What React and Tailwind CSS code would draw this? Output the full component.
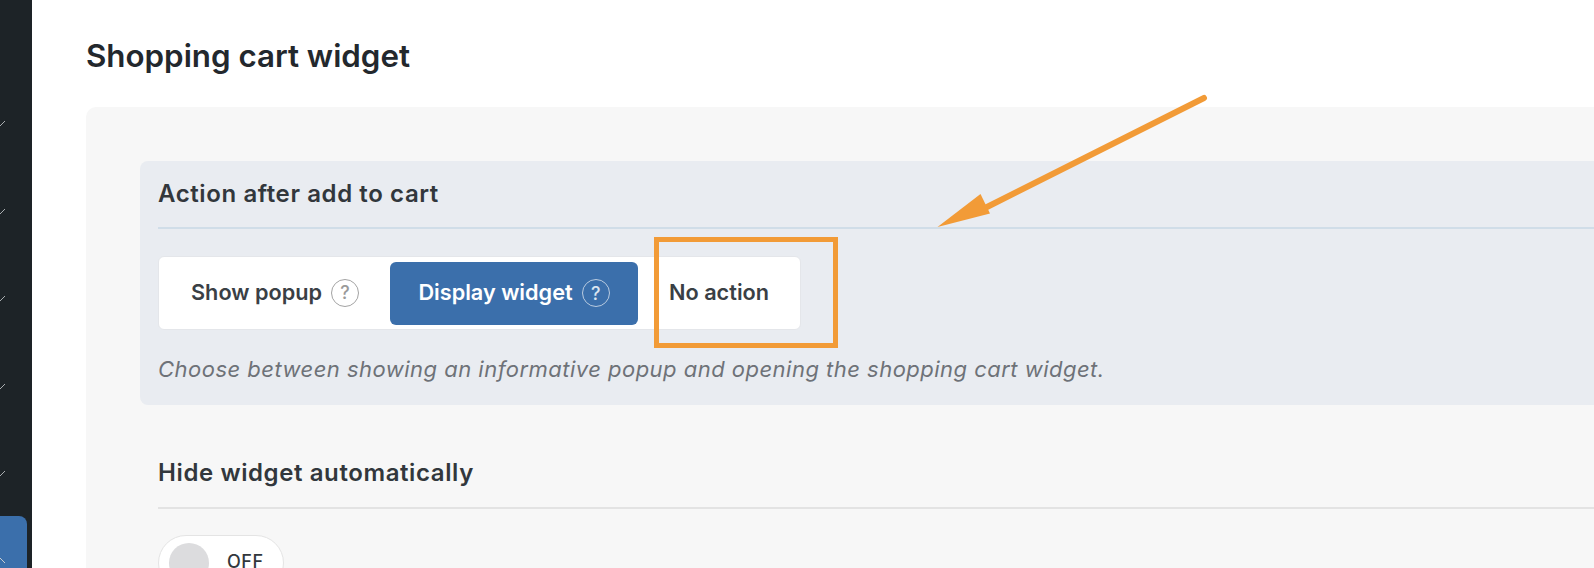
import React from "react";

const font = { fontFamily: "Inter, sans-serif" };

function Help({ light }) {
  return (
    <span
      className={`ml-[9px] flex h-[28px] w-[28px] items-center justify-center rounded-full border text-[18px] font-medium ${
        light ? "border-[#b9cbe0] text-[#dbe5f0]" : "border-[#a3a3a3] text-[#9a9a9a]"
      }`}
    >
      ?
    </span>
  );
}

function Tick({ flip }) {
  return (
    <svg width="6" height="8" viewBox="0 0 6 8" className="block">
      {flip ? (
        <path d="M0 1l5 5" stroke="#c9cdd0" strokeWidth="1" fill="none" />
      ) : (
        <path d="M0 7l5-5" stroke="#a9adb0" strokeWidth="1" fill="none" />
      )}
    </svg>
  );
}

function Sidebar() {
  return (
    <aside className="h-[568px] w-8 shrink-0 overflow-hidden bg-[#1d2327] pt-[119px]">
      <div className="flex flex-col gap-[79.5px]">
        <Tick />
        <Tick />
        <Tick />
        <Tick />
        <Tick />
      </div>
      <div className="mt-[39px] h-[80px] w-[27px] rounded-tr-[8px] bg-[#3b6fab] pt-[41px]">
        <Tick flip />
      </div>
    </aside>
  );
}

function App() {
  return (
    <div className="relative flex h-[568px] w-[1594px] overflow-hidden bg-white text-[#32373c]" style={font}>
      <Sidebar />
      <main className="min-w-0 flex-1 pl-[54px]">
        <h1 className="mt-[35px] h-[42px] text-[31.3px] leading-[42px] font-semibold text-[#23282d]">
          Shopping cart widget
        </h1>
        <div className="mt-[30px] h-[600px] w-[1600px] rounded-tl-[10px] bg-[#f7f7f7] pt-[54px] pl-[54px]">
          <section className="h-[244px] rounded-l-[8px] bg-[#e9ecf1] pl-[18px]">
            <h2 className="h-[66px] pt-[17px] text-[24px] leading-[32px] font-semibold tracking-[0.6px]">
              Action after add to cart
            </h2>
            <div className="h-[2px] bg-[#d0dde8]" />
            <div className="mt-[27px] flex h-[74px] w-[643px] items-center rounded-[6px] border border-[#e4e6ea] bg-white pl-[32px] text-[21.7px] font-semibold text-[#3a3f45]">
              <span className="flex items-center">
                <span className="pb-[2px]">Show popup</span>
                <Help />
              </span>
              <span className="ml-[31px] flex h-[63px] w-[248px] items-center justify-center rounded-[6px] bg-[#3b6fab] text-white">
                <span className="pb-[2px]">Display widget</span>
                <Help light />
              </span>
              <span className="ml-[31px] pb-[2px]">No action</span>
            </div>
            <p className="mt-[25px] text-[22px] leading-[28px] tracking-[0.48px] text-[#6e7278] italic">
              Choose between showing an informative popup and opening the shopping cart widget.
            </p>
          </section>
          <h2 className="mt-[52px] h-[50px] pl-[18px] text-[24px] leading-[32px] font-semibold tracking-[0.6px]">
            Hide widget automatically
          </h2>
          <div className="ml-[18px] h-[2px] bg-[#e3e3e3]" />
          <div className="mt-[26px] ml-[18px] flex h-[56px] w-[126px] items-center rounded-full border border-[#e4e4e4] bg-white pl-[10px]">
            <span className="h-[40px] w-[40px] rounded-full bg-[#dcdcde]" />
            <span className="ml-[18px] pb-[3px] text-[18px] font-medium tracking-[0.5px]">OFF</span>
          </div>
        </div>
      </main>

      {/* annotation drawn over the page */}
      <div className="absolute top-[237px] left-[654px] h-[111px] w-[184px] border-[5px] border-[#f29b37]" />
      <svg className="absolute top-0 left-0" width="1594" height="568" viewBox="0 0 1594 568" fill="none">
        <path d="M1204 98L985 208" stroke="#f29b37" strokeWidth="6" strokeLinecap="round" />
        <path d="M937.5 227L980.5 194L990 213.5Z" fill="#f29b37" />
      </svg>
    </div>
  );
}

export default App;
